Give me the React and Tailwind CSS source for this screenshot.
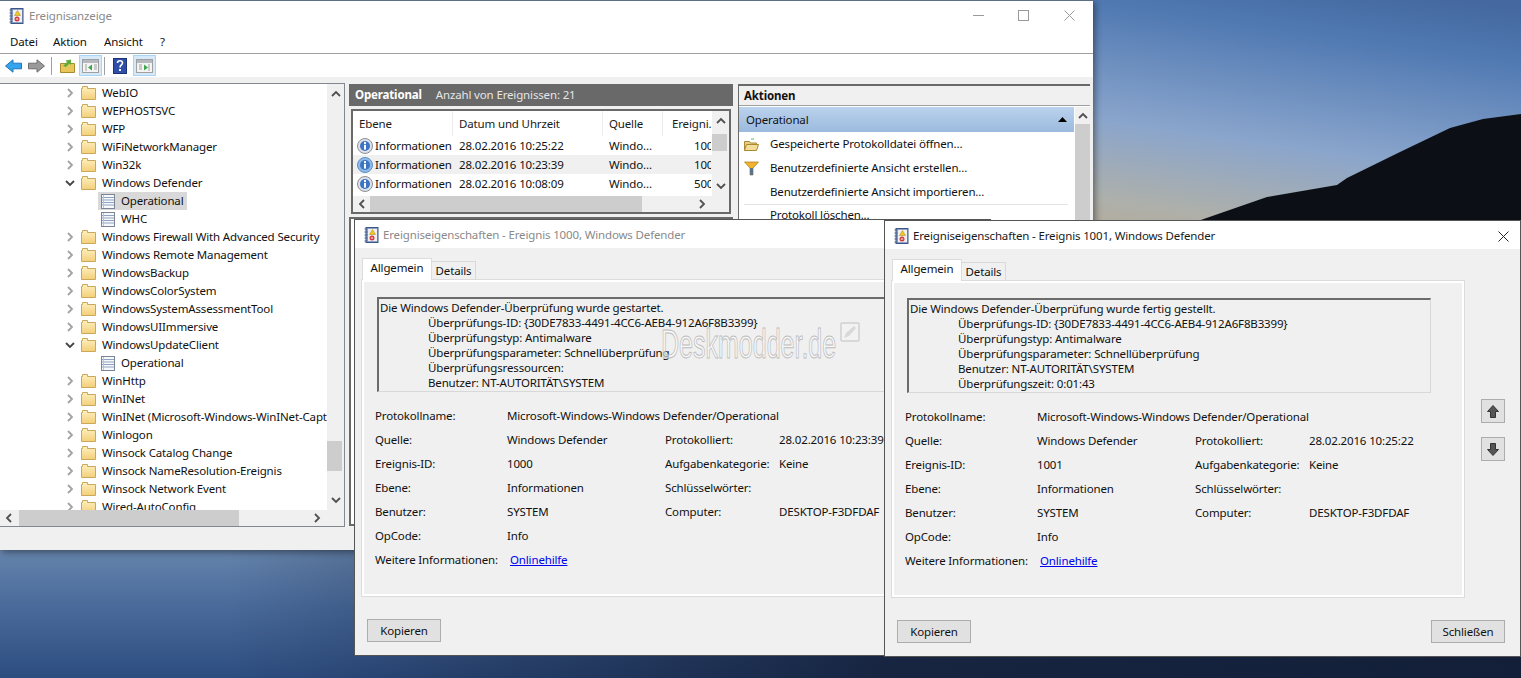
import React from 'react';

const treeRows = [
  { label: 'WebIO' },
  { label: 'WEPHOSTSVC' },
  { label: 'WFP' },
  { label: 'WiFiNetworkManager' },
  { label: 'Win32k' },
  { label: 'Windows Defender', open: true },
  { label: 'Operational', child: true, selected: true },
  { label: 'WHC', child: true },
  { label: 'Windows Firewall With Advanced Security' },
  { label: 'Windows Remote Management' },
  { label: 'WindowsBackup' },
  { label: 'WindowsColorSystem' },
  { label: 'WindowsSystemAssessmentTool' },
  { label: 'WindowsUIImmersive' },
  { label: 'WindowsUpdateClient', open: true },
  { label: 'Operational', child: true },
  { label: 'WinHttp' },
  { label: 'WinINet' },
  { label: 'WinINet (Microsoft-Windows-WinINet-Capture)' },
  { label: 'Winlogon' },
  { label: 'Winsock Catalog Change' },
  { label: 'Winsock NameResolution-Ereignis' },
  { label: 'Winsock Network Event' },
  { label: 'Wired-AutoConfig' },
];

const eventRows = [
  { date: '28.02.2016 10:25:22', id: '1001' },
  { date: '28.02.2016 10:23:39', id: '1000', hover: true },
  { date: '28.02.2016 10:08:09', id: '5007' },
];

const AppIcon = () => (
  <svg width="15" height="16" viewBox="0 0 15 16" className="shrink-0">
    <rect x="2" y="0.5" width="12" height="15" fill="#8ea3c4" stroke="#3d5688" />
    <rect x="4" y="2" width="9" height="12" fill="#eef0f4" />
    <path d="M0.5 2h3M0.5 5h3M0.5 8h3M0.5 11h3M0.5 14h3" stroke="#4a5f8c" />
    <path d="M8.5 2.5l3 5h-6z" fill="#f2c81e" stroke="#a88412" strokeWidth="0.5" />
    <circle cx="8" cy="11" r="2.5" fill="#d23b3b" />
    <path d="M6.8 11h2.4" stroke="#fff" />
  </svg>
);

const Folder = () => (
  <svg width="15" height="14" viewBox="0 0 15 14" className="shrink-0">
    <defs>
      <linearGradient id="fold" x1="0" y1="0" x2="0" y2="1">
        <stop offset="0" stopColor="#fdf0c0" />
        <stop offset="1" stopColor="#f3cf78" />
      </linearGradient>
    </defs>
    <path d="M0.5 13.5V2.5h1V0.5h5v2h8v11z" fill="url(#fold)" stroke="#c9a85c" />
  </svg>
);

const LogIcon = () => (
  <svg width="14" height="15" viewBox="0 0 14 15" className="shrink-0">
    <rect x="0.5" y="0.5" width="13" height="14" fill="#f7f8fa" stroke="#7b8595" />
    <path d="M1 3.5h12M1 6h12M1 8.5h12M1 11h12" stroke="#8fa3c2" />
    <path d="M2.5 1v13" stroke="#b7c3d6" />
  </svg>
);

const InfoIcon = ({ blue }) => (
  <svg width="16" height="16" viewBox="0 0 16 16" className="shrink-0">
    <circle cx="8" cy="8" r="7.5" fill={blue ? '#8fbbe6' : '#dfe2e7'} stroke={blue ? '#5b8fc7' : '#8a8f99'} />
    <circle cx="8" cy="8" r="5" fill="#3d74c4" />
    <rect x="7" y="6.8" width="2" height="4.8" fill="#fff" />
    <rect x="7" y="4" width="2" height="2" fill="#fff" />
  </svg>
);

const Chevron = ({ dir = 'right', color = '#a2a2a2', size = 10, width = 1.8 }) => {
  const paths = {
    right: 'M3 1l4 4-4 4',
    left: 'M7 1L3 5l4 4',
    up: 'M1 7l4-4 4 4',
    down: 'M1 3l4 4 4-4',
  };
  return (
    <svg width={size} height={size} viewBox="0 0 10 10" className="shrink-0">
      <path d={paths[dir]} fill="none" stroke={color} strokeWidth={width} />
    </svg>
  );
};

const ToggleIcon = ({ flip }) => (
  <svg width="17" height="14" viewBox="0 0 17 14">
    <rect x="0.5" y="0.5" width="16" height="13" fill="#f4f4f4" stroke="#a0a0a0" />
    <rect x="1" y="1" width="15" height="3" fill="#b4b9bf" />
    {flip ? (
      <>
        <path d="M3 6h3M3 8h3M3 10h3" stroke="#a0a0a0" />
        <path d="M8 5.5l4 3-4 3z" fill="#3aa84a" />
        <path d="M13 5v7" stroke="#a0a0a0" />
      </>
    ) : (
      <>
        <path d="M4 5v7" stroke="#a0a0a0" />
        <path d="M10 5.5l-4 3 4 3z" fill="#3aa84a" />
        <path d="M12 6h3M12 8h3M12 10h3" stroke="#a0a0a0" />
      </>
    )}
  </svg>
);

const TitleButtons = () => (
  <div className="flex items-center text-[#9a9a9a]">
    <svg width="11" height="11" viewBox="0 0 11 11" className="mr-[34px]">
      <path d="M0 5.5h11" stroke="#9a9a9a" />
    </svg>
    <svg width="11" height="11" viewBox="0 0 11 11" className="mr-[35px]">
      <rect x="0.5" y="0.5" width="10" height="10" fill="none" stroke="#9a9a9a" />
    </svg>
    <svg width="11" height="11" viewBox="0 0 11 11">
      <path d="M0.5 0.5l10 10M10.5 0.5l-10 10" stroke="#9a9a9a" />
    </svg>
  </div>
);

const Toolbar = () => (
  <div className="flex h-[23px] items-center bg-white pl-[5px]">
    <svg width="17" height="14" viewBox="0 0 17 14">
      <path d="M0.5 7L8 0.8v3.4h8.5v5.6H8v3.4z" fill="#34a4ec" stroke="#2276b8" />
    </svg>
    <svg width="17" height="14" viewBox="0 0 17 14" className="ml-[6px]">
      <path d="M16.5 7L9 0.8v3.4H0.5v5.6H9v3.4z" fill="#9a9a9a" stroke="#6d6d6d" />
    </svg>
    <div className="ml-[6px] h-[18px] w-px bg-[#a0a0a0]" />
    <svg width="15" height="15" viewBox="0 0 15 15" className="ml-[8px]">
      <path d="M0.5 14.5V5.5h14v9z" fill="#e9c65a" stroke="#a98b2e" />
      <path d="M3 8l4-4-1.5-1.5L11 1.5 11 7 9.5 5.5 6 9z" fill="#5fae3a" />
    </svg>
    <div className="ml-[4px] flex h-[21px] w-[23px] items-center justify-center border border-[#a8d4f5] bg-[#d5e9f9]">
      <ToggleIcon />
    </div>
    <div className="ml-[2px] h-[18px] w-px bg-[#a0a0a0]" />
    <svg width="14" height="16" viewBox="0 0 14 16" className="ml-[8px]">
      <rect x="0.5" y="0.5" width="13" height="15" fill="#2f4ea8" stroke="#1e3377" />
      <path d="M4.5 5c0-3 5-3 5 0 0 2-2.5 2-2.5 4.5" fill="none" stroke="#fff" strokeWidth="1.6" />
      <rect x="6" y="11" width="2" height="2" fill="#fff" />
    </svg>
    <div className="ml-[6px] flex h-[21px] w-[23px] items-center justify-center border border-[#a8d4f5] bg-[#d5e9f9]">
      <ToggleIcon flip />
    </div>
  </div>
);

const ScrollV = ({ thumbTop, thumbH }) => (
  <div className="relative flex w-[17px] shrink-0 flex-col items-center justify-between bg-[#f0f0f0] py-[5px]">
    <Chevron dir="up" color="#505050" size={10} />
    <div className="absolute left-0 w-[15px] bg-[#cdcdcd]" style={{ top: thumbTop, height: thumbH }} />
    <Chevron dir="down" color="#505050" size={10} />
  </div>
);

const ScrollH = ({ thumbLeft, thumbW, arrowPad }) => (
  <div className="relative flex h-[16px] shrink-0 items-center justify-between bg-[#f0f0f0] px-[4px]" style={{ paddingRight: arrowPad }}>
    <Chevron dir="left" color="#505050" />
    <div className="absolute top-0 h-[16px] bg-[#cdcdcd]" style={{ left: thumbLeft, width: thumbW }} />
    <Chevron dir="right" color="#505050" />
  </div>
);

const Tree = () => (
  <div className="flex h-[444px] w-[345px] shrink-0 flex-col border border-l-0 border-[#828790] bg-white">
    <div className="flex min-h-0 flex-1">
      <div className="min-w-0 flex-1 overflow-hidden">
        {treeRows.map((row, i) => (
          <div key={i} className="flex h-[18px] items-center whitespace-nowrap">
            {row.child ? (
              <div className={`ml-[98px] flex h-[18px] items-center pl-[3px] ${row.selected ? 'w-[89px] bg-[#d9d9d9]' : ''}`}>
                <LogIcon />
                <span className="ml-[6px]">{row.label}</span>
              </div>
            ) : (
              <>
                <div className="ml-[65px] w-[16px] shrink-0">
                  {row.open ? <Chevron dir="down" color="#444444" /> : <Chevron dir="right" />}
                </div>
                <Folder />
                <span className="ml-[6px]">{row.label}</span>
              </>
            )}
          </div>
        ))}
      </div>
      <ScrollV thumbTop={357} thumbH={30} />
    </div>
    <ScrollH thumbLeft={19} thumbW={220} arrowPad={22} />
  </div>
);

const EventList = () => (
  <div className="mx-[2px] mt-[3px] flex h-[105px] flex-col border-2 border-[#696969] bg-white">
    <div className="flex min-h-0 flex-1">
      <div className="min-w-0 flex-1 overflow-hidden">
        <div className="flex h-[25px] items-center text-[#1a1a1a]">
          <div className="flex h-full w-[100px] items-center border-r border-[#ececec] pl-[6px]">Ebene</div>
          <div className="flex h-full w-[150px] items-center border-r border-[#ececec] pl-[6px]">Datum und Uhrzeit</div>
          <div className="flex h-full w-[60px] items-center border-r border-[#ececec] pl-[6px]">Quelle</div>
          <div className="flex-1 pl-[9px]">Ereigni.</div>
        </div>
        {eventRows.map((row) => (
          <div key={row.date} className={`flex h-[19px] items-center ${row.hover ? 'bg-[#f0f0f0]' : ''}`}>
            <div className="flex w-[100px] items-center gap-[2px] pl-[4px]">
              <InfoIcon blue={row.hover} />
              <span>Informationen</span>
            </div>
            <div className="w-[150px] pl-[6px]">{row.date}</div>
            <div className="w-[60px] pl-[6px]">Windo...</div>
            <div className="w-[48px] overflow-hidden pl-[31px]">{row.id}</div>
          </div>
        ))}
      </div>
      <ScrollV thumbTop={23} thumbH={17} />
    </div>
    <ScrollH thumbLeft={17} thumbW={272} arrowPad={22} />
  </div>
);

const ActionRow = ({ icon, children }) => (
  <div className="flex h-[24px] items-center">
    <div className="ml-[5px] flex w-[26px] shrink-0 items-center">{icon}</div>
    <span>{children}</span>
  </div>
);

const Actions = () => (
  <div className="flex h-[443px] w-[352px] shrink-0 flex-col overflow-hidden border-t-2 border-l border-[#696969] bg-white">
    <div className="flex h-[20px] items-center border-b border-[#a0a0a0] bg-[#f0f0f0] pl-[5px] font-bold">Aktionen</div>
    <div className="mt-px flex min-h-0 flex-1">
      <div className="min-w-0 flex-1">
        <div className="flex h-[25px] items-center justify-between bg-[linear-gradient(180deg,#bad2ec,#9cbade)] px-[7px]">
          <span>Operational</span>
          <svg width="9" height="5" viewBox="0 0 9 5">
            <path d="M4.5 0L9 5H0z" fill="#000" />
          </svg>
        </div>
        <ActionRow
          icon={
            <svg width="15" height="13" viewBox="0 0 15 13">
              <path d="M0.5 12.5V3.5h5l1 1.5h6v2" fill="#e8d089" stroke="#a98b2e" />
              <path d="M0.5 12.5l2-6h12l-2 6z" fill="#f4dd9a" stroke="#a98b2e" />
              <path d="M7 1h3" stroke="#58c04a" />
            </svg>
          }
        >
          Gespeicherte Protokolldatei öffnen...
        </ActionRow>
        <ActionRow
          icon={
            <svg width="15" height="15" viewBox="0 0 15 15">
              <path d="M0.5 1h14L9 7v7H6V7z" fill="#f2b32c" stroke="#a77b18" strokeWidth="0.7" />
              <path d="M6 7h3v7H6z" fill="#5f7388" />
            </svg>
          }
        >
          Benutzerdefinierte Ansicht erstellen...
        </ActionRow>
        <ActionRow>Benutzerdefinierte Ansicht importieren...</ActionRow>
        <div className="ml-[5px] mr-[6px] h-px bg-[#e4e4e4]" />
        <div className="pl-[31px] pt-[2px]">Protokoll löschen...</div>
      </div>
      <div className="relative ml-px flex w-[15px] shrink-0 justify-center bg-[#f0f0f0] pt-[4px]">
        <Chevron dir="up" color="#505050" />
        <div className="absolute inset-x-0 bottom-0 top-[17px] bg-[#cdcdcd]" />
      </div>
    </div>
  </div>
);

const MainWindow = () => (
  <div className="absolute left-0 top-0 flex h-[550px] w-[1093px] flex-col border-t border-[#5c6f85] bg-white shadow-[2px_2px_7px_rgba(0,0,0,0.45)]">
    <div className="flex h-[29px] items-center justify-between pl-[9px] pr-[18px]">
      <div className="flex items-center gap-[5px] text-[#8a8a8a]">
        <AppIcon />
        <span>Ereignisanzeige</span>
      </div>
      <TitleButtons />
    </div>
    <div className="flex h-[24px] items-center border-b border-[#a0a0a0] pl-[10px] pt-[1px]">
      <span className="w-[43px]">Datei</span>
      <span className="w-[51px]">Aktion</span>
      <span className="w-[56px]">Ansicht</span>
      <span>?</span>
    </div>
    <Toolbar />
    <div className="flex min-h-0 flex-1 items-start bg-[#f0f0f0] pt-[6px]">
      <Tree />
      <div className="ml-[4px] flex h-[443px] w-[384px] shrink-0 flex-col pt-px">
        <div className="flex h-[22px] items-center bg-[#696969] pl-[6px] text-[#e6e6e6]">
          <span className="font-bold text-white">Operational</span>
          <span className="ml-[14px]">Anzahl von Ereignissen: 21</span>
        </div>
        <EventList />
        <div className="mt-[3px] min-h-0 flex-1 border-2 border-[#696969] bg-white" />
      </div>
      <div className="ml-[5px] pt-px">
        <Actions />
      </div>
    </div>
  </div>
);

const Field = ({ label, value }) => (
  <>
    <div>{label}</div>
    <div>{value}</div>
  </>
);

const EventDialog = ({ pos, active, title, lines, d }) => (
  <div className={`absolute flex h-[437px] w-[637px] flex-col border border-[#555555] bg-[#f0f0f0] ${pos} ${active ? 'z-20' : 'z-10'}`}>
    <div className="flex h-[28px] shrink-0 items-center justify-between bg-white pl-[9px] pr-[11px] pt-[2px]">
      <div className={`flex items-center gap-[4px] ${active ? 'text-[#1a1a1a]' : 'text-[#8a8a8a]'}`}>
        <AppIcon />
        <span>{title}</span>
      </div>
      <svg width="11" height="11" viewBox="0 0 11 11">
        <path d="M0.5 0.5l10 10M10.5 0.5l-10 10" stroke="#222" />
      </svg>
    </div>
    <div className="flex flex-1 flex-col px-[7px] pt-[10px]">
      <div className="flex h-[22px] items-end">
        <div className="relative z-10 flex h-[22px] w-[70px] items-center justify-center border border-b-0 border-[#dcdcdc] bg-white pb-[4px]">Allgemein</div>
        <div className="flex h-[19px] w-[44px] items-center justify-center border border-b-0 border-l-0 border-[#d9d9d9]">Details</div>
      </div>
      <div className="flex items-start">
        <div className="h-[316px] w-[572px] shrink-0 border-2 border-white pl-[13px] pt-[15px] outline outline-[#dcdcdc]">
          <div className="h-[95px] w-[524px] border border-l-2 border-t-2 border-[#d8d8d8] border-l-[#6b6b6b] border-t-[#6b6b6b] pl-[1px] pt-[1px] leading-[15px]">
            {lines.map((line, i) => (
              <div key={line} className={i > 0 ? 'pl-[48px]' : ''}>{line}</div>
            ))}
          </div>
          <div className="-ml-[2px] mt-[12px] grid auto-rows-[24px] grid-cols-[132px_158px_114px_1fr] items-center whitespace-nowrap">
            <Field label="Protokollname:" value="Microsoft-Windows-Windows Defender/Operational" />
            <div />
            <div />
            <Field label="Quelle:" value="Windows Defender" />
            <Field label="Protokolliert:" value={d.date} />
            <Field label="Ereignis-ID:" value={d.id} />
            <Field label="Aufgabenkategorie:" value="Keine" />
            <Field label="Ebene:" value="Informationen" />
            <Field label="Schlüsselwörter:" value="" />
            <Field label="Benutzer:" value="SYSTEM" />
            <Field label="Computer:" value="DESKTOP-F3DFDAF" />
            <Field label="OpCode:" value="Info" />
            <div />
            <div />
            <div>Weitere Informationen:</div>
            <div className="pl-[3px] text-[#0000ee] underline">Onlinehilfe</div>
          </div>
        </div>
        <div className="ml-[17px] mt-[118px] flex flex-col gap-[14px]">
          <div className="flex h-[24px] w-[24px] items-center justify-center border border-[#adadad] bg-[#e1e1e1]">
            <svg width="12" height="13" viewBox="0 0 12 13">
              <path d="M6 0.5L11.5 6.5H8.5V12.5H3.5V6.5H0.5z" fill="#555" stroke="#333" />
            </svg>
          </div>
          <div className="flex h-[24px] w-[24px] items-center justify-center border border-[#adadad] bg-[#e1e1e1]">
            <svg width="12" height="13" viewBox="0 0 12 13">
              <path d="M6 12.5L11.5 6.5H8.5V0.5H3.5V6.5H0.5z" fill="#555" stroke="#333" />
            </svg>
          </div>
        </div>
      </div>
      <div className="mt-[23px] flex justify-between pl-[5px] pr-[8px]">
        <div className="flex h-[23px] w-[74px] items-center justify-center border border-[#adadad] bg-[#e1e1e1]">Kopieren</div>
        <div className="flex h-[23px] w-[74px] items-center justify-center border border-[#adadad] bg-[#e1e1e1]">Schließen</div>
      </div>
    </div>
    {!active && (
      <div className="absolute left-[306px] top-[104px] flex items-center text-[41px] leading-none tracking-normal text-white/50 [-webkit-text-stroke:1px_#bcbcbc] [font-family:'Liberation_Sans',sans-serif]">
        <span className="origin-left scale-x-[0.61]">Deskmodder.de</span>
      </div>
    )}
    {!active && (
      <svg width="20" height="20" viewBox="0 0 20 20" className="absolute left-[485px] top-[102px]">
        <rect x="1" y="1" width="18" height="18" rx="1" fill="#f4f4f4" fillOpacity="0.6" stroke="#d0d0d0" strokeWidth="1.5" />
        <path d="M4 16l2-5 8-7 2 2-7 8z" fill="#d8d8d8" />
      </svg>
    )}
  </div>
);

const Desktop = () => (
  <div className="absolute inset-0 bg-[linear-gradient(188deg,#44689f_1%,#5079b2_7%,#8aa5cc_20%,#aeb0aa_29%,#b4aa98_33%,#b4aa98_60%)]">
    <svg width="1521" height="300" viewBox="0 0 1521 300" className="absolute left-0 top-0">
      <path d="M1195 222L1267 197L1337 185L1347 178L1400 152L1450 128L1483 119L1521 114V300H1195z" fill="#0d0f16" />
    </svg>
    <div className="absolute inset-x-0 bottom-0 top-[545px] bg-[linear-gradient(90deg,rgba(20,32,58,0)_15%,rgba(20,32,58,0.9)_58%,#131f38_100%),linear-gradient(180deg,#6886ad_0%,#4a6b9b_45%,#2d4d80_100%)]" />
  </div>
);

export default function App() {
  return (
    <div className="relative h-[678px] w-[1521px] overflow-hidden text-[11.5px] leading-[16px] tracking-[-0.15px] text-[#111111] [font-family:'Noto_Sans',sans-serif]">
      <Desktop />
      <MainWindow />
      <EventDialog
        pos="left-[354px] top-[219px]"
        title="Ereigniseigenschaften - Ereignis 1000, Windows Defender"
        lines={[
          'Die Windows Defender-Überprüfung wurde gestartet.',
          'Überprüfungs-ID: {30DE7833-4491-4CC6-AEB4-912A6F8B3399}',
          'Überprüfungstyp: Antimalware',
          'Überprüfungsparameter: Schnellüberprüfung',
          'Überprüfungsressourcen:',
          'Benutzer: NT-AUTORITÄT\\SYSTEM',
        ]}
        d={{ date: '28.02.2016 10:23:39', id: '1000' }}
      />
      <EventDialog
        active
        pos="left-[884px] top-[220px]"
        title="Ereigniseigenschaften - Ereignis 1001, Windows Defender"
        lines={[
          'Die Windows Defender-Überprüfung wurde fertig gestellt.',
          'Überprüfungs-ID: {30DE7833-4491-4CC6-AEB4-912A6F8B3399}',
          'Überprüfungstyp: Antimalware',
          'Überprüfungsparameter: Schnellüberprüfung',
          'Benutzer: NT-AUTORITÄT\\SYSTEM',
          'Überprüfungszeit: 0:01:43',
        ]}
        d={{ date: '28.02.2016 10:25:22', id: '1001' }}
      />
    </div>
  );
}
